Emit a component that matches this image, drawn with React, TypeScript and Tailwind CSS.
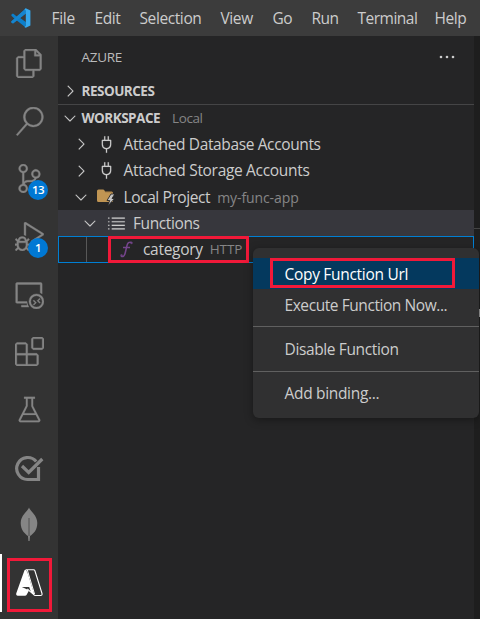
import React from "react";
import {
  VscBeaker,
  VscChevronDown,
  VscChevronRight,
  VscDebugAlt,
  VscExtensions,
  VscFiles,
  VscListUnordered,
  VscPlug,
  VscRemoteExplorer,
  VscSearch,
  VscSourceControl,
} from "react-icons/vsc";

const menus = [
  { label: "File", cls: "w-[43px] tracking-[-0.3px]" },
  { label: "Edit", cls: "w-[45px] tracking-[-0.4px]" },
  { label: "Selection", cls: "w-[81px] tracking-[-0.4px]" },
  { label: "View", cls: "w-[52px] tracking-[-0.4px]" },
  { label: "Go", cls: "w-[39px] tracking-[-0.6px]" },
  { label: "Run", cls: "w-[46px] tracking-[-0.5px]" },
  { label: "Terminal", cls: "w-[77px] tracking-[-0.5px]" },
  { label: "Help", cls: "w-[40px] tracking-[-0.4px]" },
];

function VsCodeLogo() {
  return (
    <svg width="20" height="20" viewBox="0 0 100 100">
      <path d="M74 2 29 43 10 28 2 32v7l16 15L2 66v7l8 4 19-15 45 36V70L46 50l28-22Z" fill="#0c7fcb" />
      <path d="M2 66 74 2v26L10 77l-8-4Z" fill="#1685cf" />
      <path d="M74 1 97 12v76L74 99l-7-4 7-6V12l-7-6Z" fill="#35a8ee" />
    </svg>
  );
}

function AzureLogo() {
  return (
    <svg width="28" height="28" viewBox="0 0 28 28">
      <path d="M9.500 1.200Q10 .5 11 .5L13 5l3 10 3.500 11-5.500-4.500L11.500 26q-.5.700-1.500.7H2.500Q.7 26.500 1.200 24.500Z" fill="#fff" />
      <path d="M6.800 18h7.400l1.800 5.300-4.200-3Z" fill="#333" />
      <path d="M11 .8h7.500q1 0 1.400 1L27 24.500q.4 2-1.500 2h-5q-1.200 0-1.700-.8L12.300 20" fill="none" stroke="#fff" strokeWidth="1.100" />
      <path d="M12.300 1 19.500 25" stroke="#fff" strokeWidth="1" />
    </svg>
  );
}

function CheckLogo() {
  return (
    <svg width="30" height="30" viewBox="0 0 30 30" fill="none" stroke="#858585" strokeWidth="3.200">
      <path d="M22.200 9.500A11 11 0 1 0 13.500 27.500h11V15" />
      <path d="m8 14 6.700 6.500L28.300 7" />
    </svg>
  );
}

function Leaf() {
  return (
    <svg width="18" height="35" viewBox="0 0 18 35">
      <path d="M9 .5C10 4 17.300 8 17.300 16c0 7-4 11-7.300 13l-.4 5H8.400L8 29C5 27 .7 23 .7 16 .7 8 8 4 9 .5Z" fill="#858585" />
      <path d="M9 11v18" stroke="#505050" strokeWidth="1" />
    </svg>
  );
}

function FolderIcon() {
  return (
    <svg width="18" height="17" viewBox="0 0 18 17">
      <path d="M0 2q0-1.500 1.500-1.500H6q1 0 1.500 1l.5 1h6.500q1.500 0 1.500 1.500v9H1.500Q0 13 0 11.500Z" fill="#c09553" />
      <path d="M8 2.700h7" stroke="#6e5735" />
      <path d="m14 5-4 6.500h2.700l-2 5.500 7-7.500H15L17.800 5Z" fill="#c5c5c5" stroke="#252526" strokeWidth=".9" />
    </svg>
  );
}

function FunctionIcon() {
  return (
    <svg width="13" height="17" viewBox="0 0 13 17" fill="none" stroke="#75458c" strokeWidth="1.500">
      <path d="M1 15c2 1.200 3.500 0 4.200-3L7 4.500C7.600 2 9 .6 11.500 1.500M3 6.500h7" />
      <circle cx="11.500" cy="2" r=".4" />
      <circle cx="1.500" cy="14.500" r=".4" />
    </svg>
  );
}

function MoreIcon() {
  return (
    <svg width="16" height="4" viewBox="0 0 16 4" fill="#cccccc">
      <circle cx="2" cy="2" r="1.300" />
      <circle cx="8" cy="2" r="1.300" />
      <circle cx="14" cy="2" r="1.300" />
    </svg>
  );
}

function Badge({ children }: { children: React.ReactNode }) {
  return (
    <span className="absolute left-[28px] top-[30px] flex size-5 items-center justify-center rounded-full bg-[#0078d4] text-[11.500px] font-semibold tracking-[-0.5px] text-white">
      {children}
    </span>
  );
}

function ActivityItem({ children }: { children: React.ReactNode }) {
  return (
    <div className="relative flex h-[57.700px] w-[58px] shrink-0 items-center justify-center text-[29px] text-[#858585]">
      {children}
    </div>
  );
}

export default function App() {
  return (
    <div className="relative flex h-[619px] w-[480px] flex-col overflow-hidden bg-[#1e1e1e] font-['Open_Sans','Noto_Sans',sans-serif] text-[15.500px] leading-none whitespace-nowrap text-[#cccccc]">
      <header className="flex h-9 shrink-0 items-center bg-[#3c3c3c]">
        <div className="w-[51.500px] pl-[11px]"><VsCodeLogo /></div>
        {menus.map((m) => <span key={m.label} className={`shrink-0 pt-[2px] ${m.cls}`}>{m.label}</span>)}
      </header>

      <div className="flex min-h-0 flex-1">
        <nav className="flex w-[58px] shrink-0 flex-col bg-[#333333] [&_svg]:shrink-0">
          <div className="-mt-[1.500px] flex flex-col">
            <ActivityItem><VscFiles strokeWidth={0.300} /></ActivityItem>
            <ActivityItem><VscSearch strokeWidth={0.300} /></ActivityItem>
            <ActivityItem><VscSourceControl strokeWidth={0.300} /><Badge>13</Badge></ActivityItem>
            <ActivityItem><VscDebugAlt strokeWidth={0.300} /><Badge>1</Badge></ActivityItem>
            <ActivityItem><VscRemoteExplorer strokeWidth={0.300} /></ActivityItem>
            <ActivityItem><VscExtensions strokeWidth={0.300} /></ActivityItem>
            <ActivityItem><VscBeaker strokeWidth={0.100} /></ActivityItem>
            <ActivityItem><CheckLogo /></ActivityItem>
            <ActivityItem><Leaf /></ActivityItem>
            <ActivityItem>
              <span className="absolute left-0 top-0 h-[58px] w-[2px] bg-white" />
              <span className="pt-px"><AzureLogo /></span>
              <span className="absolute left-[7px] top-[4px] h-[54px] w-[45px] border-[3px] border-[#f11939]" />
            </ActivityItem>
          </div>
        </nav>

        <aside className="flex w-[416px] shrink-0 flex-col bg-[#252526]">
          <div className="flex h-[42px] items-center justify-between pl-[23.500px] pr-[19px] text-[#bbbbbb]">
            <span className="pt-[2px] text-[13.500px] tracking-[-0.300px]">AZURE</span>
            <MoreIcon />
          </div>
          <div className="flex h-[27px] items-center border-b border-[#454546] pl-[3px] text-[13.500px] font-bold">
            <VscChevronRight size={18} strokeWidth={0.100} className="mr-[2.500px]" />
            <span className="pt-px tracking-[-0.500px]">RESOURCES</span>
          </div>
          <div className="flex h-[26px] items-center pl-[3px] text-[13.500px]">
            <VscChevronDown size={18} strokeWidth={0.100} className="mr-[2.500px]" />
            <span className="pt-px font-bold tracking-[-0.500px]">WORKSPACE</span>
            <span className="ml-3 pt-px text-[13.500px] tracking-[-0.400px] text-[#858586]">Local</span>
          </div>
          <div className="flex h-[26px] items-center pl-[14px]">
            <VscChevronRight size={18} strokeWidth={0.100} />
            <VscPlug size={19} strokeWidth={0.100} className="ml-[7px] mr-[7.500px]" />
            <span className="pt-[2px] tracking-[-0.370px]">Attached Database Accounts</span>
          </div>
          <div className="flex h-[27px] items-center pl-[14px]">
            <VscChevronRight size={18} strokeWidth={0.100} />
            <VscPlug size={19} strokeWidth={0.100} className="ml-[7px] mr-[7.500px]" />
            <span className="pt-px tracking-[-0.320px]">Attached Storage Accounts</span>
          </div>
          <div className="flex h-[26px] items-center pl-[14px]">
            <VscChevronDown size={18} strokeWidth={0.100} />
            <span className="ml-[7px] w-[26.500px]"><FolderIcon /></span>
            <span className="pt-[2px] tracking-[-0.400px]">Local Project</span>
            <span className="ml-[7px] pt-[2px] text-[14px] tracking-[-0.100px] text-[#858586]">my-func-app</span>
          </div>
          <div className="flex h-[26px] items-center bg-[#37373d] pl-[23px]">
            <VscChevronDown size={18} strokeWidth={0.100} />
            <VscListUnordered size={19} strokeWidth={0.100} className="ml-[8px] mr-[7px]" />
            <span className="pt-[2px] tracking-[-0.400px]">Functions</span>
          </div>
          <div className="relative flex h-[27px] items-center border border-[#007fd4]">
            <span className="ml-[27px] h-full w-px bg-[#585858]" />
            <span className="ml-[33px] w-[23px]"><FunctionIcon /></span>
            <span className="pt-px tracking-[-0.300px]">category</span>
            <span className="ml-[7px] pt-px text-[13.500px] tracking-[-0.100px] text-[#858586]">HTTP</span>
            <span className="absolute left-[49px] top-[-1px] h-[27px] w-[141px] border-[3px] border-[#f11939]" />
          </div>
        </aside>
        <main className="flex flex-1 flex-col bg-[#1e1e1e]">
          <div className="h-[193px] border-b border-[#444444]" />
          <div className="mt-[80px] ml-[5px] h-2 w-px bg-[#999999]" />
        </main>
      </div>

      <div className="absolute left-[253px] top-[248px] flex h-[170px] w-[226px] flex-col rounded-[6px] bg-[#303031] pt-[10px] shadow-[0_2px_8px_rgba(0,0,0,0.36)]">
        <div className="relative flex h-[31px] items-center bg-[#04395e] pl-[31.500px] text-white">
          <span className="pt-[2px] tracking-[-0.300px]">Copy Function Url</span>
          <span className="absolute left-[17px] top-0 h-[30px] w-[185px] border-[3px] border-[#f11939]" />
        </div>
        <div className="flex h-[38px] items-center border-b border-[#606060] pb-[4px] pl-[31.500px]"><span className="tracking-[-0.430px]">Execute Function Now...</span></div>
        <div className="flex h-[45px] items-center border-b border-[#606060] pl-[31.500px]"><span className="pt-[2px] tracking-[-0.370px]">Disable Function</span></div>
        <div className="flex h-[44px] items-center pl-[31.500px]"><span className="tracking-[-0.320px]">Add binding...</span></div>
      </div>
    </div>
  );
}
